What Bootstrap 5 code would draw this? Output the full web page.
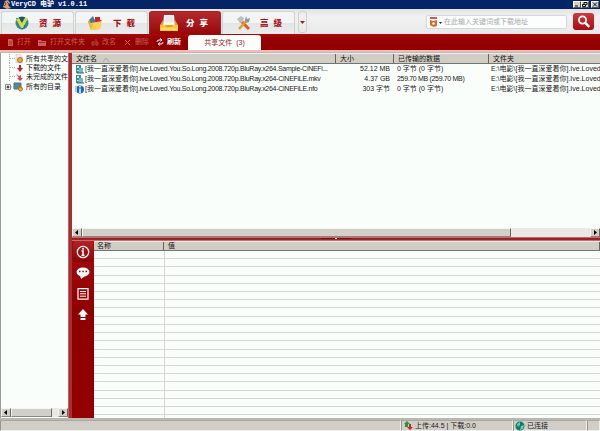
<!DOCTYPE html>
<html lang="zh-CN">
<head>
    <meta charset="UTF-8">
    <title>VeryCD 电驴</title>
    <link href="https://cdn.jsdelivr.net/npm/bootstrap@5.3.0/dist/css/bootstrap.min.css" rel="stylesheet">
    <style>
        body {
            width: 600px;
            height: 431px;
            overflow: hidden;
            background: #d2cfc8;
            font: 7px/10px "Liberation Sans", "Noto Sans CJK SC", sans-serif;
            color: #222;
            white-space: nowrap;
        }

        svg { display: block; flex: none; }

        /* Title bar */
        .title-bar {
            height: 9px;
            background: #052465;
            color: #fff;
            font: bold 7px/9px "Liberation Mono", "Noto Sans CJK SC", monospace;
        }
        .title-text { letter-spacing: -.05px; }
        .win-btn {
            width: 8px;
            height: 7px;
            background: #d4d0c8;
            border: 1px solid;
            border-color: #fff #555 #555 #fff;
        }

        /* Main tabs */
        .tab-bar {
            height: 25px;
            padding: 2px 0 0 1px;
            background: linear-gradient(#e2e3e4, #f1f1f1 30%, #e9e9e9);
        }
        .main-tab {
            width: 73px;
            height: 23px;
            margin-right: 1px;
            padding-left: 13px;
            border: 1px solid #d0d1d1;
            border-bottom: 0;
            border-radius: 3px 3px 0 0;
            background: linear-gradient(#f3f4f4 50%, #e4e5e5 50%, #ececec);
            color: #a81a1e;
            font-size: 8.5px;
            font-weight: bold;
        }
        .main-tab b { width: 22px; display: flex; justify-content: space-between; }
        .main-tab.current {
            width: 72px;
            padding-left: 10px;
            background: linear-gradient(#b5282b, #a01215 70%, #980608);
            border-color: #a32024;
            color: #fff;
        }
        .tab-more { width: 9px; height: 22px; border: 1px solid #cfcfcf; border-radius: 3px; margin-left: 2px; }
        .search-box {
            width: 141px;
            height: 14px;
            margin-right: 6px;
            background: #fcfdfd;
            border: 1px solid #d5d8d8;
            border-radius: 2px;
            color: #aaa;
            font-size: 7px;
        }
        .search-btn {
            width: 21px;
            height: 17px;
            margin-right: 6px;
            border-radius: 3px;
            background: linear-gradient(#cf3a3e, #a50d11);
        }

        /* Toolbar */
        .tool-bar {
            height: 16px;
            background: linear-gradient(#a80a0b, #930000 40%, #930000);
            color: #c4625f;
        }
        .tool { height: 16px; }
        .tool svg { margin-right: 3px; }
        .share-tab {
            width: 73px;
            height: 15px;
            margin-top: 1px;
            border-radius: 3px 3px 0 0;
            background: #fbfefc;
            color: #a01a1c;
        }
        .under-line { height: 3px; background: linear-gradient(#f3bcb8 60%, #bbb8b4 60%); }

        /* Tree */
        .tree-pane { width: 68px; background: #fafefb; border-left: 1px solid #999; }
        .tree-row { height: 9.4px; padding-left: 4px; }
        .tree-row span { margin-left: 3px; color: #111; }

        /* Splitters */
        .split-v { width: 4px; background: linear-gradient(90deg, #d0807e, #a52c2f 35%, #a92f32); }
        .split-h { height: 4px; background: linear-gradient(#d98f8c, #98171b 40%, #a2282b 70%, #dda09b); }

        /* Lists */
        .list-head {
            height: 11px;
            background: #d0cdc5;
            border-top: 1px solid #eee;
            border-bottom: 1px solid #77756f;
            color: #111;
        }
        .list-head > div { padding-left: 4px; border-right: 1px solid #66645f; height: 9px; line-height: 9px; }
        .detail-head { height: 10px; }
        .detail-head > div { height: 8px; line-height: 8px; }
        .file-row { height: 10px; }
        .c-name { width: 264px; padding-left: 3px; }
        .c-size { width: 58px; }
        .c-data { width: 95px; }
        .c-path { padding-left: 1px; }
        .c-name span { margin-left: 1px; }
        .file-row > div { flex: none; }
        .file-row .c-size { padding-right: 4px; text-align: right; }
        .file-row .c-data { padding-left: 3px; }
        .file-row .c-path { padding-left: 2px; width: 111px; overflow: hidden; }
        .lat { letter-spacing: -.27px; }

        /* Scroll bars */
        .scroll-bar { height: 9px; background: #e9e8e4; }
        .scroll-btn, .scroll-thumb {
            height: 9px;
            background: #d1cfc7;
            border: 1px solid;
            border-color: #f4f4f0 #6c6a66 #8a8882 #f4f4f0;
        }
        .scroll-btn { width: 10px; }

        /* Details */
        .side-bar { width: 22px; background: linear-gradient(#a40c0e, #8e0000 40%, #930000); }
        .side-item { height: 21.2px; display: flex; align-items: center; justify-content: center; }
        .side-item.current { background: linear-gradient(#b32326, #8d0305); border-radius: 2px; margin: 0 1px; }
        .detail-grid {
            background: linear-gradient(90deg, transparent 70px, #d6d8d6 70px, #d6d8d6 71px, transparent 71px),
                repeating-linear-gradient(#fafefb 0, #fafefb 7.2px, #d6d8d6 7.2px, #d6d8d6 8.21px);
        }

        /* Status bar */
        .status-bar { height: 13px; background: #d1cec7; border-top: 2px solid #bbb8b2; }
        .status-cell { height: 11px; border: 1px solid; border-color: #aaa8a2 #eee #eee #99968f; }
    </style>
</head>
<body class="d-flex flex-column">
    <div class="title-bar d-flex align-items-center flex-shrink-0">
        <svg width="8" height="9" viewBox="0 0 8 9" style="margin-left:3px"><path d="M0 7 2 1l3-1 2 3-2 2 3 3-4 1z" fill="#d7a16d"/><path d="m1 1 2 3-2 2M4 2l2 2" stroke="#71402e" fill="none"/></svg>
        <span class="title-text flex-grow-1">VeryCD 电驴 v1.0.11</span>
        <div class="win-btn"><svg width="6" height="5"><path d="M1 4h3" stroke="#111"/></svg></div>
        <div class="win-btn"><svg width="6" height="5"><path d="M2 2V.5h3v2H4M.5 2.500h3v2h-3z" fill="none" stroke="#111"/></svg></div>
        <div class="win-btn" style="margin:0 1px 0 2px"><svg width="6" height="5"><path d="m1 .5 4 4m0-4-4 4" stroke="#111"/></svg></div>
    </div>

    <div class="tab-bar d-flex flex-shrink-0">
        <div class="main-tab d-flex align-items-center">
            <svg width="14" height="14" viewBox="0 0 14 14"><circle cx="7" cy="7" r="6.500" fill="#2d85a8"/><path d="M1 2 7 13l3-3-5-8z" fill="#1b4d70"/><path d="m4 2 3 5 3-5h3L8 12H6L1 3z" fill="#d4df35"/><path d="M4 1h6L7 6z" fill="#1c5273"/></svg>
            <b style="margin-left:10px"><span>资</span><span>源</span></b>
        </div>
        <div class="main-tab d-flex align-items-center" style="padding-left:11px">
            <svg width="16" height="15" viewBox="0 0 16 15"><path d="m1 5 5-2 8 2-1 8-9 1z" fill="#e39a1c"/><path d="m2 4 4-4 2 5 6-1-1 3H4z" fill="#3b7fa8"/><path d="M8 1h5v3h2l-4 4-3-3z" fill="#ca2724"/><path d="m4 7 11-2-2 8-9 1z" fill="#ffd15b"/><path d="m1 6 3 8 2-6z" fill="#f6b32d"/></svg>
            <b style="margin-left:10px"><span>下</span><span>载</span></b>
        </div>
        <div class="main-tab current d-flex align-items-center">
            <svg width="18" height="18" viewBox="0 0 18 18"><path d="M4 1h10l1 10H3z" fill="#f4f5f5"/><path d="M5 3h8M5 5h8M4 7h9" stroke="#c9cecf" stroke-width=".6"/><path d="m3 6-3 5v6h18v-6l-3-5v5H3z" fill="#e8a119"/><path d="M0 11h5l1 2h6l1-2h5v5l-1 1H1l-1-1z" fill="#ffc83a"/><path d="M1 15h16" stroke="#fff09b"/></svg>
            <b style="margin-left:8px"><span>分</span><span>享</span></b>
        </div>
        <div class="main-tab d-flex align-items-center">
            <svg width="15" height="15" viewBox="0 0 15 15"><path d="m4 4 9 9" stroke="#db5c24" stroke-width="3"/><path d="M1 3 5 0l3 2-1 4-3 1z" fill="#bac0c3"/><path d="m3 13 8-9" stroke="#e49b25" stroke-width="2.500"/><path d="m9 4 1-4 1 3 3-1-1 4-3 1z" fill="#8e979c"/></svg>
            <b style="margin-left:9px"><span>高</span><span>级</span></b>
        </div>
        <div class="tab-more d-flex align-items-center justify-content-center"><svg width="5" height="3"><path d="M0 0h5L2.500 3z" fill="#a32124"/></svg></div>
        <div class="d-flex align-items-center ms-auto" style="height:21px">
            <div class="search-box d-flex align-items-center">
                <svg width="16" height="12" viewBox="0 0 16 12"><path d="M3 2h7" stroke="#bd2922" stroke-width="1.500"/><path d="m3 4 3 1 4-1v6L6.500 11 3 9z" fill="#d76e26"/><circle cx="6.500" cy="7.500" r="1.200" fill="#fff"/><path d="M12 6h3l-1.500 2z" fill="#222"/></svg>
                <span style="margin-left:1px">在此输入关键词或下载地址</span>
            </div>
            <div class="search-btn d-flex align-items-center justify-content-center"><svg width="14" height="13" viewBox="0 0 14 13"><circle cx="5.500" cy="5" r="3.600" fill="none" stroke="#fff" stroke-width="1.800"/><path d="m8.300 7.800 4 4" stroke="#fff" stroke-width="2.400"/></svg></div>
        </div>
    </div>

    <div class="tool-bar d-flex flex-shrink-0">
        <div class="tool d-flex align-items-center" style="width:31px;margin-left:7px"><svg width="7" height="7"><path d="M1 0h4l1 2v5H1z" fill="#c4625f"/><path d="M2 3h3M2 5h3" stroke="#930000" stroke-width=".6"/></svg>打开</div>
        <div class="tool d-flex align-items-center" style="width:53px"><svg width="9" height="7"><path d="M0 1h3l1 1h4v5H0z" fill="#c4625f"/><path d="M1 3.500h6" stroke="#930000" stroke-width=".6"/></svg>打开文件夹</div>
        <div class="tool d-flex align-items-center" style="width:33px"><svg width="8" height="7" fill="none" stroke="#b64a48"><path d="M3 3H1v3h2V2M5 0v6h2V3H5"/></svg>改名</div>
        <div class="tool d-flex align-items-center" style="width:32px"><svg width="8" height="7"><path d="m1 1 5 5m0-5L1 6" stroke="#c4625f"/></svg>删除</div>
        <div class="tool d-flex align-items-center text-white fw-bold" style="width:32px"><svg width="8" height="8" fill="none" stroke="#fff"><path d="M1 4q0-2 2-2h3M4 .500 6 2 4.500 3.500M7 4q0 2-2 2H2m2-1.500L2 6l1.500 1.500"/></svg>刷新</div>
        <div class="share-tab d-flex align-items-center justify-content-center"><span>共享文件&nbsp; (3)</span></div>
    </div>
    <div class="under-line flex-shrink-0"></div>

    <div class="d-flex flex-grow-1" style="min-height:0">
        <div class="tree-pane d-flex flex-column flex-shrink-0">
            <div class="tree-row d-flex align-items-center" style="margin-top:1px"><svg width="18" height="10"><path d="M4.500 0v10M5 4.500h6" stroke="#aaa" stroke-dasharray="1"/><path d="M11 0h4l2 3v6h-6z" fill="#eee" stroke="#bbb" stroke-width=".5"/><circle cx="15" cy="6" r="2.500" fill="#f0ad36" stroke="#b46c20"/></svg><span>所有共享的文</span></div>
            <div class="tree-row d-flex align-items-center"><svg width="18" height="10"><path d="M4.500 0v10M5 4.500h6" stroke="#aaa" stroke-dasharray="1"/><path d="M11 0h4l2 3v6h-6z" fill="#f4f4f4"/><path d="M14 2h2v3h2l-3 4-3-4h2z" fill="#c32128"/></svg><span>下载的文件</span></div>
            <div class="tree-row d-flex align-items-center"><svg width="18" height="10"><path d="M4.500 0v10M5 4.500h6" stroke="#aaa" stroke-dasharray="1"/><path d="M11 0h4l2 3v6h-6z" fill="#f4f4f4"/><path d="m11 2 3 2 2-1v3h2l-3 3-3-3h2z" fill="#d5444c"/></svg><span>未完成的文件</span></div>
            <div class="tree-row d-flex align-items-center"><svg width="18" height="10"><path d="M.5 2.500h5v5h-5z" fill="#fff" stroke="#888"/><path d="M1.500 5h3M3 3.500v3" stroke="#111"/><path d="M6 5h3" stroke="#aaa" stroke-dasharray="1"/><path d="M9 1h7v6H9z" fill="#478d98" stroke="#626d72"/><circle cx="15.500" cy="7" r="2" fill="#f0ad36" stroke="#b46c20"/></svg><span>所有的目录</span></div>
            <div class="scroll-bar d-flex mt-auto" style="margin-bottom:1px">
                <div class="scroll-btn"><svg width="8" height="7"><path d="M5 1v5L2 3.500z"/></svg></div>
                <div class="scroll-thumb" style="width:41px"></div>
                <div class="scroll-btn ms-auto"><svg width="8" height="7"><path d="M3 1v5l3-2.500z"/></svg></div>
            </div>
        </div>
        <div class="split-v flex-shrink-0"></div>
        <div class="d-flex flex-column flex-grow-1" style="min-width:0">
            <div class="d-flex flex-column flex-shrink-0 overflow-hidden" style="height:184px;background:#fafefb">
                <div class="list-head d-flex flex-shrink-0">
                    <div class="c-name">文件名 <svg class="d-inline-block ms-1" width="6" height="5"><path d="m0 5 3-4 3 4" fill="none" stroke="#aaa"/></svg></div>
                    <div class="c-size">大小</div>
                    <div class="c-data">已传输的数据</div>
                    <div class="c-path flex-grow-1 border-0">文件夹</div>
                </div>
                <div class="file-row d-flex">
                    <div class="c-name d-flex align-items-center"><svg width="9" height="9"><path d="M1 0h5v8H1z" fill="#438895"/><path d="M2 1h2v2H2zM2 5h2v1H2z" fill="#c5e9ee"/><path d="M4 3h4v5H3z" fill="#76b8bf"/><path d="M2 8h7" stroke="#315e70"/></svg><span>[我一直深爱着你]<i class="lat fst-normal">.Ive.Loved.You.So.Long.2008.720p.BluRay.x264.Sample-CiNEFi...</i></span></div>
                    <div class="c-size">52.12 MB</div><div class="c-data">0 字节 (0 字节)</div><div class="c-path">E:\电影\[我一直深爱着你].Ive.Loved</div>
                </div>
                <div class="file-row d-flex">
                    <div class="c-name d-flex align-items-center"><svg width="9" height="9"><path d="M1 0h5v8H1z" fill="#438895"/><path d="M2 1h2v2H2zM2 5h2v1H2z" fill="#c5e9ee"/><path d="M4 3h4v5H3z" fill="#76b8bf"/><path d="M2 8h7" stroke="#315e70"/></svg><span>[我一直深爱着你]<i class="lat fst-normal">.Ive.Loved.You.So.Long.2008.720p.BluRay.x264-CiNEFiLE.mkv</i></span></div>
                    <div class="c-size">4.37 GB</div><div class="c-data" style="letter-spacing:-.33px">259.70 MB (259.70 MB)</div><div class="c-path">E:\电影\[我一直深爱着你].Ive.Loved</div>
                </div>
                <div class="file-row d-flex">
                    <div class="c-name d-flex align-items-center"><svg width="9" height="9"><circle cx="5" cy="4.500" r="4" fill="#1769c4"/><path d="M5 1v1.500M5 3.500V8" stroke="#fff" stroke-width="1.500"/><path d="M0 1h2v6H0z" fill="#a9cde2"/></svg><span>[我一直深爱着你]<i class="lat fst-normal">.Ive.Loved.You.So.Long.2008.720p.BluRay.x264-CiNEFiLE.nfo</i></span></div>
                    <div class="c-size">303 字节</div><div class="c-data">0 字节 (0 字节)</div><div class="c-path">E:\电影\[我一直深爱着你].Ive.Loved</div>
                </div>
                <div class="scroll-bar d-flex mt-auto">
                    <div class="scroll-btn"><svg width="8" height="7"><path d="M5 1v5L2 3.500z"/></svg></div>
                    <div class="scroll-thumb" style="width:429px"></div>
                    <div class="scroll-btn ms-auto"><svg width="8" height="7"><path d="M3 1v5l3-2.500z"/></svg></div>
                </div>
            </div>
            <div class="split-h flex-shrink-0 d-flex justify-content-center"><svg width="30" height="3"><path d="M0 1.500h30" stroke="#7a1215"/><path d="M14 1.500h2" stroke="#fff"/></svg></div>
            <div class="d-flex flex-grow-1" style="min-height:0">
                <div class="side-bar flex-shrink-0">
                    <div class="side-item current"><svg width="14" height="14"><circle cx="7" cy="7" r="5.700" fill="none" stroke="#fff" stroke-width="1.200"/><path d="M7 3v1.700M5.500 6H7v4M5.500 10.200h3" stroke="#fff" stroke-width="1.600" fill="none"/></svg></div>
                    <div class="side-item"><svg width="14" height="12"><ellipse cx="7" cy="5" rx="6.500" ry="4.500" fill="#fff"/><path d="m4 8 1 4 4-3z" fill="#fff"/><path d="M3 4.500h1.500M6.300 4.500h1.500M9.500 4.500H11" stroke="#930000" stroke-width="1.500"/></svg></div>
                    <div class="side-item"><svg width="12" height="12"><path d="M1 .700h10v10.500H1z" fill="none" stroke="#fff" stroke-width="1.200"/><path d="M3 3.500h6M3 5.800h6M3 8.200h6" stroke="#fff"/></svg></div>
                    <div class="side-item"><svg width="12" height="12"><path d="m6 0 5 5.500H8.500V8h-5V5.500H1zM3.500 9h5v2h-5z" fill="#fff"/></svg></div>
                </div>
                <div class="d-flex flex-column flex-grow-1">
                    <div class="list-head detail-head d-flex flex-shrink-0"><div style="width:70px;padding-left:3px">名称</div><div class="flex-grow-1">值</div></div>
                    <div class="detail-grid flex-grow-1"></div>
                </div>
            </div>
        </div>
    </div>

    <div class="status-bar d-flex flex-shrink-0">
        <div class="status-cell" style="width:401px"></div>
        <div class="status-cell d-flex align-items-center" style="width:112px;padding-left:2px"><svg width="9" height="9"><path d="M3 0 6 3H4v3H1V3H0z" fill="#23973a"/><path d="M5 3h2v3h2L6 9 3 6h2z" fill="#c92328"/></svg><span style="margin-left:2px">上传:44.5 | 下载:0.0</span></div>
        <div class="status-cell d-flex align-items-center" style="width:74px;padding-left:1px"><svg width="10" height="10"><circle cx="5" cy="5" r="4.500" fill="#12776e"/><path d="m2 3 3-2v3L3 6M6 5l3-1-1 4-3 1z" fill="#65d0a2"/></svg><span style="margin-left:2px">已连接</span></div>
        <div class="status-cell flex-grow-1"></div>
    </div>
    <script src="https://cdn.jsdelivr.net/npm/bootstrap@5.3.0/dist/js/bootstrap.bundle.min.js"></script>
</body>
</html>
